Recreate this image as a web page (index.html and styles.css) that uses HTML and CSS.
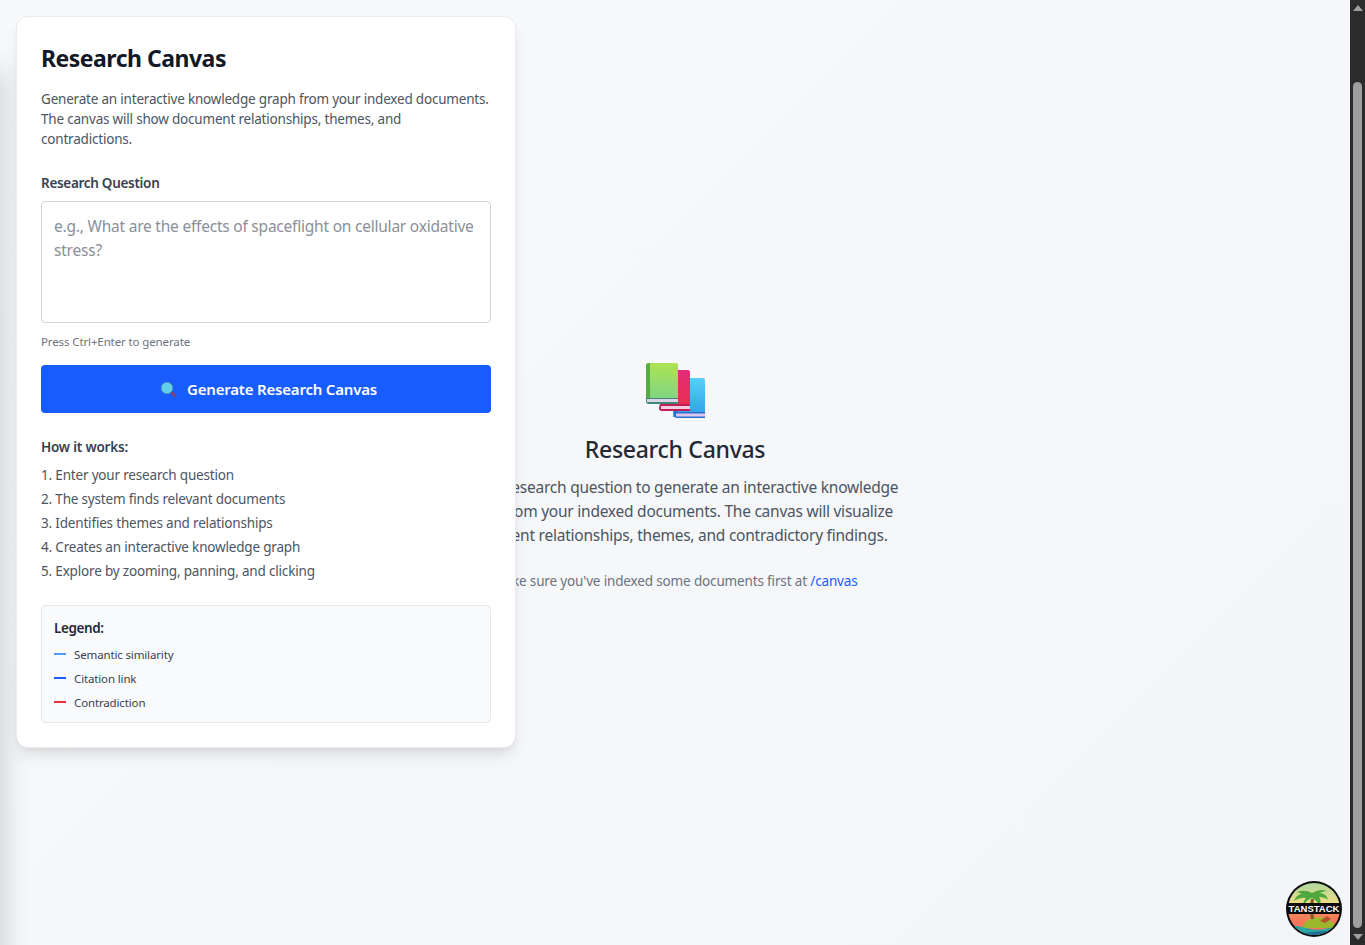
FILE: index.html
```html
<!DOCTYPE html>
<html lang="en">
<head>
    <meta charset="UTF-8">
    <meta name="viewport" content="width=device-width, initial-scale=1.0">
    <title>Research Canvas</title>
    <link rel="stylesheet" href="styles.css">
</head>
<body>
    <main class="canvas-page">
        <div class="edge-shadow"></div>

        <section class="empty-state">
            <svg class="books-icon" width="62" height="58" viewBox="0 0 62 58">
                <defs>
                    <linearGradient id="bookGreen" x1="0" y1="0" x2="0" y2="1"><stop offset="0" stop-color="#aee352"/><stop offset="1" stop-color="#7dd488"/></linearGradient>
                    <linearGradient id="bookRed" x1="0" y1="0" x2="0" y2="1"><stop offset="0" stop-color="#e22c7c"/><stop offset="1" stop-color="#e8304c"/></linearGradient>
                    <linearGradient id="bookBlue" x1="0" y1="0" x2="0" y2="1"><stop offset="0" stop-color="#58cff8"/><stop offset="1" stop-color="#2f9fe8"/></linearGradient>
                </defs>
                <path d="M28 16h30a2 2 0 0 1 2 2v37H28z" fill="url(#bookBlue)"/>
                <path d="M29 48h4v4h-4z" fill="#2a6fd0"/>
                <path d="M29 50h31v6H32a3 3 0 0 1-3-3v-3z" fill="#2a6fd0"/>
                <rect x="31" y="51.500" width="29" height="3" fill="#ddc8ec"/>
                <path d="M15 8h28a2 2 0 0 1 2 2v35H15z" fill="url(#bookRed)"/>
                <path d="M15 42h30v7H17a3 3 0 0 1-3-3z" fill="#bf1d55"/>
                <rect x="16" y="44" width="29" height="3" fill="#f2cfe0"/>
                <path d="M4 1h27a2 2 0 0 1 2 2v35H1V4a3 3 0 0 1 3-3z" fill="url(#bookGreen)"/>
                <path d="M4 1h1v35H1V4a3 3 0 0 1 3-3z" fill="#57ad3f"/>
                <path d="M1 36h32v6H4a3 3 0 0 1-3-3z" fill="#3c8a78"/>
                <rect x="2" y="37" width="31" height="3" fill="#dcd4e6"/>
            </svg>
            <h2 class="empty-title">Research Canvas</h2>
            <p class="empty-text">Enter a research question to generate an interactive knowledge graph from your indexed documents. The canvas will visualize document relationships, themes, and contradictory findings.</p>
            <p class="empty-note">Make sure you've indexed some documents first at <a href="#">/canvas</a></p>
        </section>

        <section class="panel">
            <h1 class="panel-title">Research Canvas</h1>
            <p class="panel-intro">Generate an interactive knowledge graph from your indexed documents. The canvas will show document relationships, themes, and contradictions.</p>

            <label class="field-label" for="question">Research Question</label>
            <textarea id="question" class="question-input" placeholder="e.g., What are the effects of spaceflight on cellular oxidative stress?"></textarea>
            <p class="hint">Press Ctrl+Enter to generate</p>

            <button class="generate-btn" type="button">
                <svg width="17" height="17" viewBox="0 0 17 17">
                    <path d="M10.500 10.500 15 15" stroke="#7d3f78" stroke-width="3" stroke-linecap="round"/>
                    <circle cx="7" cy="7" r="5.800" fill="#63cfe6" stroke="#4a8fb8" stroke-width="1"/>
                </svg>
                <span>Generate Research Canvas</span>
            </button>

            <h3 class="steps-title">How it works:</h3>
            <ol class="steps">
                <li>1. Enter your research question</li>
                <li>2. The system finds relevant documents</li>
                <li>3. Identifies themes and relationships</li>
                <li>4. Creates an interactive knowledge graph</li>
                <li>5. Explore by zooming, panning, and clicking</li>
            </ol>

            <div class="legend">
                <h4 class="legend-title">Legend:</h4>
                <div class="legend-row"><span class="swatch swatch-semantic"></span>Semantic similarity</div>
                <div class="legend-row"><span class="swatch swatch-citation"></span>Citation link</div>
                <div class="legend-row"><span class="swatch swatch-contradiction"></span>Contradiction</div>
            </div>
        </section>

        <button class="devtools-btn" type="button" aria-label="TanStack devtools">
            <svg width="56" height="56" viewBox="0 0 56 56">
                <defs>
                    <clipPath id="logoClip"><circle cx="28" cy="28" r="26"/></clipPath>
                    <linearGradient id="logoSky" x1="0" y1="0" x2="0" y2="1"><stop offset="0" stop-color="#a6d8a0"/><stop offset="0.4" stop-color="#f0dc86"/><stop offset="0.42" stop-color="#f59a52"/><stop offset="0.75" stop-color="#f8745c"/></linearGradient>
                </defs>
                <circle cx="28" cy="28" r="28" fill="#0b0b0b"/>
                <g clip-path="url(#logoClip)">
                    <rect width="56" height="56" fill="url(#logoSky)"/>
                    <path d="M16 47q4-11 16-11t20 11z" fill="#9cb62e"/>
                    <path d="M0 44q10 0 20 3t18 1 18-3v11H0z" fill="#2aa6a0"/>
                    <path d="M0 50q14 3 28 1t28 0v5H0z" fill="#1d6f96"/>
                    <path d="M25 38q-2-12 0-20l3 0q-2 10 0 20z" fill="#7a5a2a"/>
                    <path d="M26 12q-7-4-15-1 3 1 5 2-6 1-8 7 7-4 12-3-3 3-3 7 5-6 9-7 5 2 7 8 3-5 0-9 6 0 9 3-1-6-8-7 3-2 7-2-7-3-15 2z" fill="#4ea83e"/>
                    <path d="M34 40l7-5 4 3-6 4z" fill="#b5522e"/>
                </g>
                <rect x="1" y="22" width="54" height="11" fill="#0b0b0b"/>
                <text class="logo-text" x="28" y="31" text-anchor="middle">TANSTACK</text>
            </svg>
        </button>

        <div class="scrollbar">
            <span class="arrow-up"></span>
            <span class="thumb"></span>
            <span class="arrow-down"></span>
        </div>
    </main>
</body>
</html>
```

FILE: styles.css
```css
* {
    box-sizing: border-box;
}
html, body {
    height: 100%;
    margin: 0;
}
body {
    font-family: "Noto Sans", "Open Sans", Arial, sans-serif;
    overflow: hidden;
}
.canvas-page {
    position: relative;
    height: 945px;
    display: flex;
    overflow: hidden;
    padding-right: 15px;
    background: linear-gradient(135deg, #f8f9fb 0%, #f3f5f8 100%);
}
.edge-shadow {
    position: absolute;
    top: 70px;
    bottom: -40px;
    left: -24px;
    width: 24px;
    box-shadow: 0 0 30px rgba(0, 0, 0, 0.22);
}

/* empty state behind the panel */
.empty-state {
    flex: 1;
    display: flex;
    flex-direction: column;
    align-items: center;
    padding-top: 362px;
    text-align: center;
}
.books-icon {
    display: block;
    margin: 0 0 13px 2px;
}
.empty-title {
    margin: 0 0 10px;
    font-size: 23px;
    line-height: 32px;
    font-weight: 500;
    letter-spacing: -0.3px;
    color: #1f2937;
}
.empty-text {
    width: 460px;
    margin: 0 0 24px;
    font-size: 15.5px;
    line-height: 24px;
    letter-spacing: -0.24px;
    color: #4b5563;
}
.empty-note {
    margin: 0;
    font-size: 13.5px;
    line-height: 20px;
    letter-spacing: -0.15px;
    color: #6b7280;
}
.empty-note a {
    color: #175cff;
    text-decoration: none;
}

/* floating panel */
.panel {
    position: absolute;
    top: 16px;
    left: 16px;
    width: 500px;
    height: 732px;
    padding: 24px;
    background: #fff;
    border: 1px solid #e8eaee;
    border-radius: 12px;
    box-shadow: 0 10px 15px -3px rgba(0, 0, 0, 0.1), 0 4px 6px -2px rgba(0, 0, 0, 0.05);
}
.panel-title {
    margin: 0 0 14px;
    font-size: 23px;
    line-height: 34px;
    font-weight: 700;
    letter-spacing: -0.5px;
    color: #111827;
}
.panel-intro {
    margin: 0 0 24px;
    font-size: 13.5px;
    line-height: 20px;
    letter-spacing: -0.2px;
    color: #4b5563;
}
.field-label {
    display: block;
    margin-bottom: 8px;
    font-size: 13.5px;
    line-height: 20px;
    font-weight: 600;
    letter-spacing: -0.3px;
    color: #374151;
}
.question-input {
    display: block;
    width: 100%;
    height: 122px;
    padding: 12px;
    font-family: inherit;
    font-size: 15.5px;
    line-height: 24px;
    letter-spacing: -0.22px;
    border: 1px solid #d1d5db;
    border-radius: 4px;
    resize: none;
    outline: none;
}
.question-input::placeholder {
    color: #8a8f98;
}
.hint {
    margin: 11px 0 15px;
    font-size: 11.5px;
    line-height: 16px;
    letter-spacing: -0.12px;
    color: #6b7280;
}
.generate-btn {
    display: flex;
    align-items: center;
    justify-content: center;
    gap: 10px;
    width: 100%;
    height: 48px;
    padding: 0 0 0 5px;
    font-family: inherit;
    font-size: 15px;
    font-weight: 600;
    letter-spacing: -0.2px;
    color: #fff;
    background: #175cff;
    border: none;
    border-radius: 4px;
    cursor: pointer;
}
.steps-title {
    margin: 24px 0 6px;
    font-size: 13.5px;
    line-height: 20px;
    font-weight: 600;
    letter-spacing: -0.2px;
    color: #374151;
}
.steps {
    margin: 0 0 22px;
    padding: 0;
    list-style: none;
    font-size: 13.5px;
    line-height: 24px;
    letter-spacing: -0.18px;
    color: #4b5563;
}
.legend {
    padding: 12px 12px 8px;
    background: #f9fafb;
    border: 1px solid #e5e7eb;
    border-radius: 4px;
}
.legend-title {
    margin: 0 0 4px;
    font-size: 13.5px;
    line-height: 20px;
    font-weight: 600;
    letter-spacing: -0.4px;
    color: #1f2937;
}
.legend-row {
    display: flex;
    align-items: center;
    gap: 8px;
    height: 24px;
    font-size: 11.5px;
    letter-spacing: -0.14px;
    color: #374151;
}
.swatch {
    width: 12px;
    height: 2px;
}
.swatch-semantic {
    background: #4f9dff;
}
.swatch-citation {
    background: #175cff;
}
.swatch-contradiction {
    background: #f02b3c;
}

/* devtools button, bottom right */
.devtools-btn {
    position: absolute;
    right: 23px;
    bottom: 8px;
    width: 56px;
    height: 56px;
    padding: 0;
    background: none;
    border: none;
    cursor: pointer;
}
.logo-text {
    font-family: "Liberation Sans", Arial, sans-serif;
    font-size: 9.5px;
    font-weight: 700;
    fill: #fff;
}

/* scrollbar */
.scrollbar {
    position: absolute;
    top: 0;
    right: 0;
    bottom: 0;
    width: 15px;
    display: flex;
    flex-direction: column;
    align-items: center;
    padding: 5px 0;
    background: #2b2b2b;
}
.arrow-up, .arrow-down {
    width: 0;
    height: 0;
    border-left: 5px solid transparent;
    border-right: 5px solid transparent;
}
.arrow-up {
    border-bottom: 6px solid #a0a0a0;
}
.arrow-down {
    border-top: 6px solid #a0a0a0;
}
.thumb {
    flex: 1;
    width: 9px;
    margin: 71px 0 6px;
    background: #9f9f9f;
    border-radius: 5px;
}
```
